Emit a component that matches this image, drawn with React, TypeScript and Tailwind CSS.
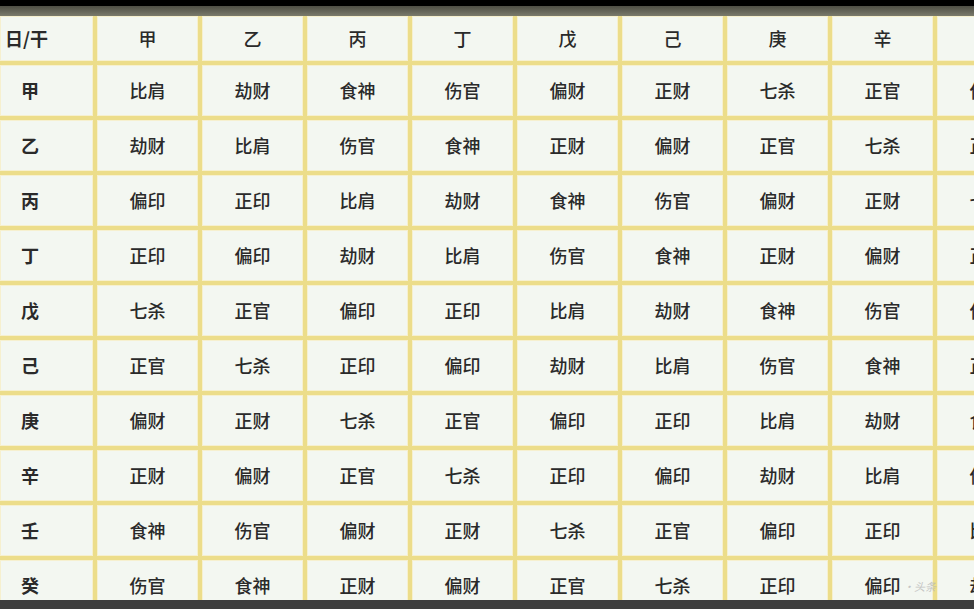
import React from "react";

const stems = ["甲", "乙", "丙", "丁", "戊", "己", "庚", "辛", "壬", "癸"];

const gods: string[][] = [
  ["比肩", "劫财", "食神", "伤官", "偏财", "正财", "七杀", "正官", "偏印", "正印"],
  ["劫财", "比肩", "伤官", "食神", "正财", "偏财", "正官", "七杀", "正印", "偏印"],
  ["偏印", "正印", "比肩", "劫财", "食神", "伤官", "偏财", "正财", "七杀", "正官"],
  ["正印", "偏印", "劫财", "比肩", "伤官", "食神", "正财", "偏财", "正官", "七杀"],
  ["七杀", "正官", "偏印", "正印", "比肩", "劫财", "食神", "伤官", "偏财", "正财"],
  ["正官", "七杀", "正印", "偏印", "劫财", "比肩", "伤官", "食神", "正财", "偏财"],
  ["偏财", "正财", "七杀", "正官", "偏印", "正印", "比肩", "劫财", "食神", "伤官"],
  ["正财", "偏财", "正官", "七杀", "正印", "偏印", "劫财", "比肩", "伤官", "食神"],
  ["食神", "伤官", "偏财", "正财", "七杀", "正官", "偏印", "正印", "比肩", "劫财"],
  ["伤官", "食神", "正财", "偏财", "正官", "七杀", "正印", "偏印", "劫财", "比肩"],
];

const cell =
  "flex items-center justify-center bg-[#f3f7f1] border border-[#f6f0cf] text-[18px] text-[#2a2a2a] whitespace-nowrap";

export default function App() {
  return (
    <div
      className="w-[974px] h-[609px] overflow-hidden flex flex-col bg-[#3b3b3b]"
      style={{ fontFamily: '"Noto Sans CJK SC", "Noto Sans", sans-serif' }}
    >
      {/* dark frame on top */}
      <div className="h-[6px] bg-black" />
      <div className="h-[10px] bg-gradient-to-b from-[#4f4f45] to-[#7a7a6c]" />

      <div className="relative flex-1 overflow-hidden bg-[#ecdd8a]">
        <div className="grid grid-cols-[93px_repeat(10,101px)] grid-rows-[45px_repeat(10,51px)] gap-[4px]">
          <div className={`${cell} justify-start pl-[4px] font-bold`}>日/干</div>
          {stems.map((s) => (
            <div key={s} className={`${cell} font-medium`}>
              {s}
            </div>
          ))}

          {stems.map((s, i) => (
            <React.Fragment key={s}>
              <div className={`${cell} justify-start pl-[20px] font-bold`}>{s}</div>
              {gods[i].map((g, j) => (
                <div key={j} className={`${cell} font-medium`}>
                  {g}
                </div>
              ))}
            </React.Fragment>
          ))}
        </div>

        {/* faint watermark */}
        <span className="absolute right-[38px] bottom-[6px] text-[11px] italic text-[#b9b9b9] opacity-80">
          ·头条
        </span>
      </div>

      <div className="h-[9px] bg-[#3e3e3e]" />
    </div>
  );
}
